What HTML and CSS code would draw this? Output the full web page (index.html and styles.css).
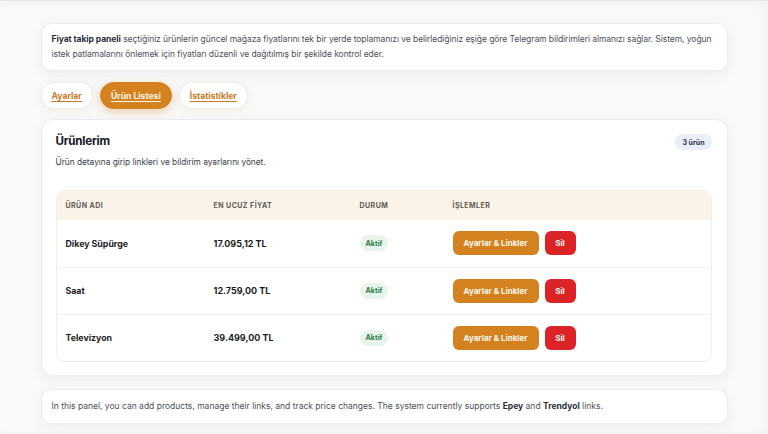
FILE: index.html
```html
<!DOCTYPE html>
<html lang="tr">
<head>
<meta charset="utf-8">
<title>Fiyat takip paneli</title>
<link rel="stylesheet" href="styles.css">
</head>
<body>
<div class="topbar"></div>
<main class="page">
  <section class="card intro">
    <p><strong>Fiyat takip paneli</strong> seçtiğiniz ürünlerin güncel mağaza fiyatlarını tek bir yerde toplamanızı ve belirlediğiniz eşiğe göre Telegram bildirimleri almanızı sağlar. Sistem, yoğun istek patlamalarını önlemek için fiyatları düzenli ve dağıtılmış bir şekilde kontrol eder.</p>
  </section>

  <nav class="tabs">
    <a class="tab" href="#">Ayarlar</a>
    <a class="tab active" href="#">Ürün Listesi</a>
    <a class="tab" href="#">İstatistikler</a>
  </nav>

  <section class="card products">
    <div class="products-head">
      <div>
        <h2 class="title">Ürünlerim</h2>
        <p class="subtitle">Ürün detayına girip linkleri ve bildirim ayarlarını yönet.</p>
      </div>
      <span class="count">3 ürün</span>
    </div>

    <div class="table-wrap">
      <table class="table">
        <colgroup>
          <col class="c1"><col class="c2"><col class="c3"><col class="c4">
        </colgroup>
        <thead>
          <tr><th>Ürün adı</th><th>En ucuz fiyat</th><th>Durum</th><th>İşlemler</th></tr>
        </thead>
        <tbody>
          <tr>
            <td class="name">Dikey Süpürge</td>
            <td class="price">17.095,12 TL</td>
            <td><span class="status">Aktif</span></td>
            <td><div class="actions"><button class="btn btn-main">Ayarlar &amp; Linkler</button><button class="btn btn-del">Sil</button></div></td>
          </tr>
          <tr>
            <td class="name">Saat</td>
            <td class="price">12.759,00 TL</td>
            <td><span class="status">Aktif</span></td>
            <td><div class="actions"><button class="btn btn-main">Ayarlar &amp; Linkler</button><button class="btn btn-del">Sil</button></div></td>
          </tr>
          <tr>
            <td class="name">Televizyon</td>
            <td class="price">39.499,00 TL</td>
            <td><span class="status">Aktif</span></td>
            <td><div class="actions"><button class="btn btn-main">Ayarlar &amp; Linkler</button><button class="btn btn-del">Sil</button></div></td>
          </tr>
        </tbody>
      </table>
    </div>
  </section>

  <section class="card footer-note">
    <p>In this panel, you can add products, manage their links, and track price changes. The system currently supports <strong>Epey</strong> and <strong>Trendyol</strong> links.</p>
  </section>
</main>
</body>
</html>
```

FILE: styles.css
```css
* { box-sizing: border-box; }

html, body {
  margin: 0;
  padding: 0;
}

body {
  min-height: 434px;
  background: #f9f9fa;
  box-shadow: inset -5px 0 8px rgba(0, 0, 0, 0.025);
  font-family: Inter, "Noto Sans", "Liberation Sans", sans-serif;
  color: #1f2330;
  -webkit-font-smoothing: antialiased;
}

.topbar {
  height: 1px;
  background: #e6e6e8;
  box-shadow: 0 2px 9px rgba(0, 0, 0, 0.14);
}

.page {
  width: 687px;
  margin: 22px auto 0;
  display: flex;
  flex-direction: column;
}

.card {
  background: #ffffff;
  border: 1px solid #ececee;
  border-radius: 10px;
  box-shadow: 0 4px 14px rgba(20, 20, 40, 0.05);
}

.intro {
  padding: 8px 9px 8px 10px;
}

.intro p {
  margin: 0;
  font-size: 8.5px;
  letter-spacing: -0.06px;
  line-height: 15px;
  color: #4a4f5c;
}

.intro strong {
  color: #2a2e3a;
  font-weight: 700;
}

.tabs {
  display: flex;
  gap: 7px;
  margin-top: 11px;
}

.tab {
  height: 27px;
  padding: 0 10px;
  display: inline-flex;
  align-items: center;
  border-radius: 14px;
  background: #ffffff;
  border: 1px solid #f1ede7;
  box-shadow: 0 2px 8px rgba(200, 130, 40, 0.10);
  color: #c77b1c;
  font-size: 8.6px;
  font-weight: 700;
  text-decoration: underline;
  text-underline-offset: 2px;
}

.tab.active {
  background: #d4821f;
  border-color: #d4821f;
  color: #fdf3e4;
  box-shadow: 0 3px 10px rgba(212, 130, 31, 0.35);
}

.products {
  margin-top: 10px;
  padding: 13px 15px 13px 14px;
  border-radius: 12px;
}

.products-head {
  display: flex;
  justify-content: space-between;
  align-items: flex-start;
}

.title {
  margin: 0;
  font-size: 11.6px;
  line-height: 16px;
  font-weight: 700;
  color: #15171f;
  letter-spacing: -0.2px;
}

.subtitle {
  margin: 6px 0 0;
  font-size: 8.3px;
  line-height: 14px;
  color: #3a3e4a;
}

.count {
  margin-top: 1px;
  height: 16px;
  padding: 0 7px;
  display: inline-flex;
  align-items: center;
  border-radius: 8px;
  background: #e9eef9;
  color: #2c3448;
  font-size: 7px;
  font-weight: 700;
}

.table-wrap {
  margin-top: 21px;
  border: 1px solid #f2efea;
  border-radius: 9px;
  overflow: hidden;
}

.table {
  width: 100%;
  border-collapse: collapse;
  table-layout: fixed;
}

.c1 { width: 148px; }
.c2 { width: 146px; }
.c3 { width: 93px; }

.table th {
  background: #fbf3e8;
  height: 29px;
  padding: 0 9px;
  text-align: left;
  font-size: 7px;
  font-weight: 700;
  letter-spacing: 0.45px;
  text-transform: uppercase;
  color: #5d5a55;
}

.table td {
  height: 47px;
  padding: 0 9px;
  border-top: 1px solid #f1f0ee;
  font-size: 8.8px;
  font-weight: 700;
  color: #1a1c24;
}

.table td.price {
  font-size: 9px;
}

.table tbody tr:first-child td {
  border-top: none;
}

.status {
  display: inline-flex;
  align-items: center;
  height: 16px;
  padding: 0 6px;
  border-radius: 8px;
  background: #e7f5eb;
  color: #2f7d45;
  font-size: 7.2px;
  font-weight: 700;
}

.actions {
  display: flex;
  gap: 6px;
}

.btn {
  height: 24px;
  border: none;
  border-radius: 6px;
  font-family: inherit;
  font-size: 8px;
  font-weight: 700;
  color: #fff8ee;
  white-space: nowrap;
  padding: 0 9px;
}

.btn-main {
  background: #d4821f;
  min-width: 86px;
}

.btn-del {
  background: #dc2328;
  width: 31px;
  padding: 0;
}

.footer-note {
  margin-top: 13px;
  padding: 9px 10px;
}

.footer-note p {
  margin: 0;
  font-size: 8.5px;
  line-height: 15px;
  color: #4a4f5c;
}

.footer-note strong {
  color: #2a2e3a;
}
```
